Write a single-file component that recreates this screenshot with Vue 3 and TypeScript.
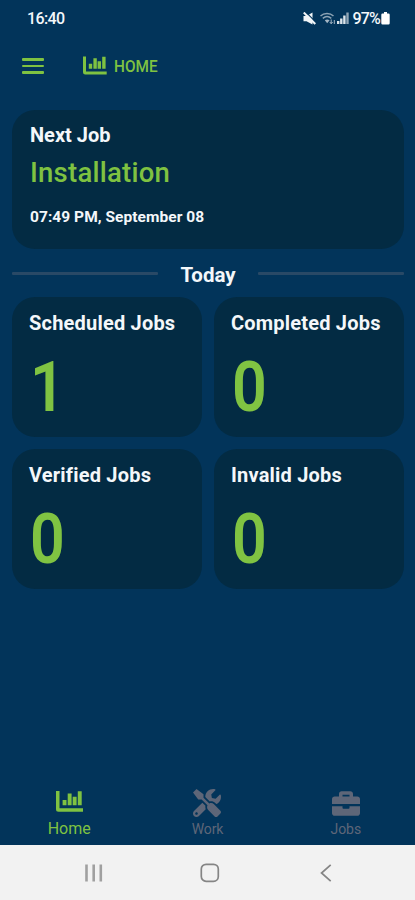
<script setup lang="ts">
import { ref } from 'vue'

interface Stat {
  label: string
  value: number
  key: string
}

type TabId = 'home' | 'work' | 'jobs'

interface Tab {
  id: TabId
  label: string
}

const stats: Stat[] = [
  { key: 'scheduled', label: 'Scheduled Jobs', value: 1 },
  { key: 'completed', label: 'Completed Jobs', value: 0 },
  { key: 'verified', label: 'Verified Jobs', value: 0 },
  { key: 'invalid', label: 'Invalid Jobs', value: 0 },
]

const tabs: Tab[] = [
  { id: 'home', label: 'Home' },
  { id: 'work', label: 'Work' },
  { id: 'jobs', label: 'Jobs' },
]

const activeTab = ref<TabId>('home')
</script>

<template>
  <div class="screen">
    <div class="status">
      <span class="clock">16:40</span>
      <div class="indicators">
        <svg class="mute" viewBox="0 0 13 13" width="13" height="13">
          <path d="M0.500 4h3L9.500 0.500v12L3.500 9.200h-3z" fill="#f1f5f8" />
          <path d="M2.200 -0.500l12 12" stroke="#02345a" stroke-width="1.200" />
          <path d="M0.800 0.500l11.500 11.500" stroke="#f1f5f8" stroke-width="2" />
        </svg>
        <svg class="wifi" viewBox="0 0 16 13" width="16" height="13" fill="none">
          <path d="M0.500 4C4 .8 10 .8 13.500 4M2.800 6.300c2.500-2 6-2 8.500 0" stroke="#8da3b4" stroke-width="1.500" />
          <path d="M4.800 8.300l2.400 3 2.400-3c-1.400-1.200-3.400-1.200-4.800 0z" fill="#a4b6c4" />
          <path d="M11.200 7.500v4M9.800 10l1.400 1.800L12.600 10M14.300 12V8" stroke="#a4b6c4" />
        </svg>
        <svg class="signal" viewBox="0 0 12 12" width="12" height="12">
          <path d="M0 9h2.400v3H0zM3.100 6.500h2.400V12H3.100zM6.200 3.500h2.400V12H6.200z" fill="#dce4ea" />
          <path d="M9.300 0.500h2.400V12H9.300z" fill="#91a6b7" />
        </svg>
        <span class="percent">97%</span>
        <svg class="battery" viewBox="0 0 9 13" width="9" height="13">
          <path d="M3 0h3v1.500h1.500q1.200 0 1.200 1.200v8.600q0 1.200-1.200 1.200h-6q-1.200 0-1.200-1.200V2.700q0-1.200 1.200-1.200H3z" fill="#fff" />
        </svg>
      </div>
    </div>

    <header class="topbar">
      <button class="menu" aria-label="Menu"><i></i><i></i><i></i></button>
      <svg class="chart" viewBox="0 0 24 19" width="24" height="19">
        <path d="M0 0.500h3v15h20.700v3H2.200Q0 18.500 0 16.300zM5.800 7.800h3.400v4.900H5.800zM10.400 2.300h3.400v10.400h-3.400zM14.600 5.300H18v7.400h-3.400zM19.200 0.800h3.400v11.900h-3.400z" fill="currentColor" />
      </svg>
      <h1 class="title">HOME</h1>
    </header>

    <main class="content">
      <section class="card next">
        <h2 class="card-title next-title">Next Job</h2>
        <p class="job">Installation</p>
        <p class="when">07:49 PM, September 08</p>
      </section>

      <div class="divider">
        <span class="line"></span>
        <h2 class="today">Today</h2>
        <span class="line"></span>
      </div>

      <div class="grid">
        <section v-for="s in stats" :key="s.key" class="card stat">
          <h3 class="card-title" :class="s.key">{{ s.label }}</h3>
          <p class="value">{{ s.value }}</p>
        </section>
      </div>
    </main>

    <nav class="tabs">
      <button
        v-for="t in tabs"
        :key="t.id"
        class="tab"
        :class="[t.id, { active: activeTab === t.id }]"
        @click="activeTab = t.id"
      >
        <span class="icon">
          <svg v-if="t.id === 'home'" viewBox="0 0 27 21" width="27" height="21">
            <path d="M0 0h3.500v17.300H27v3.500H2.500Q0 20.800 0 18.300zM6.600 9h3.900v5.200H6.600zM11.700 2.500h3.900v11.700h-3.900zM16.700 5.800h3.900v8.400h-3.900zM21.800 0.200h3.900v14h-3.900z" fill="currentColor" />
          </svg>
          <svg v-else-if="t.id === 'work'" viewBox="0 0 512 512" width="28" height="28">
            <path d="M501.100 395.700L384 278.600c-23.100-23.100-57.600-27.600-85.400-13.900L192 158.100V96L64 0 0 64l96 128h62.100l106.600 106.600c-13.600 27.800-9.200 62.300 13.900 85.400l117.100 117.100c14.600 14.600 38.200 14.600 52.700 0l52.700-52.700c14.500-14.600 14.500-38.200 0-52.700zM331.700 225c28.300 0 54.900 11 74.900 31l19.400 19.400c15.800-6.900 30.800-16.500 43.800-29.500 37.100-37.100 49.700-89.300 37.900-136.700-2.200-9-13.500-12.100-20.100-5.500l-74.400 74.400-67.900-11.300L334 98.900l74.400-74.400c6.600-6.600 3.400-17.900-5.700-20.200-47.400-11.700-99.600.9-136.600 37.900-28.500 28.500-41.900 66.100-41.200 103.600l82.100 82.100c8.100-1.900 16.500-2.900 24.700-2.900zm-103.900 82l-56.700-56.700L18.700 402.800c-25 25-25 65.500 0 90.500s65.500 25 90.500 0l123.600-123.600c-7.600-19.900-9.900-41.600-5-62.700zM64 472c-13.200 0-24-10.800-24-24 0-13.300 10.700-24 24-24s24 10.700 24 24c0 13.200-10.700 24-24 24z" fill="currentColor" />
          </svg>
          <svg v-else viewBox="0 0 512 448" width="28" height="25">
            <path d="M320 304c0 9-7 16-16 16h-96c-9 0-16-7-16-16v-32H0v128c0 25.600 22.400 48 48 48h416c25.600 0 48-22.400 48-48V272H320zM464 96h-80V48c0-25.600-22.400-48-48-48H176c-25.600 0-48 22.400-48 48v48H48c-25.600 0-48 22.400-48 48v88h512v-88c0-25.600-22.400-48-48-48zm-144 0H192V64h128z" fill="currentColor" />
          </svg>
        </span>
        <span class="tab-label">{{ t.label }}</span>
      </button>
    </nav>

    <footer class="system">
      <svg viewBox="0 0 18 18" width="18" height="18"><path d="M1.500 0.500v17M8.700 0.500v17M15.800 0.500v17" stroke="#a0a0a0" stroke-width="2.600" /></svg>
      <svg class="home-key" viewBox="0 0 20 20" width="20" height="20"><rect x="1.300" y="1.300" width="17" height="17" rx="4.800" fill="none" stroke="#858585" stroke-width="1.700" /></svg>
      <svg viewBox="0 0 12 18" width="12" height="18"><path d="M10.700 0.800L1.500 9l9.200 8.200" fill="none" stroke="#858585" stroke-width="1.700" /></svg>
    </footer>
  </div>
</template>

<style>
body {
  margin: 0;
  background: #02345a;
}
</style>

<style scoped>
.screen {
  width: 415px;
  height: 900px;
  display: flex;
  flex-direction: column;
  overflow: hidden;
  background: #02345a;
  color: #f4f7fa;
  font-family: Roboto, "Liberation Sans", sans-serif;
}
h1, h2, h3, p {
  margin: 0;
  white-space: nowrap;
}
button {
  padding: 0;
  border: 0;
  background: none;
  font: inherit;
  color: inherit;
}
.status {
  height: 36px;
  box-sizing: border-box;
  padding: 0 25px 0 27px;
  display: flex;
  align-items: center;
  justify-content: space-between;
}
.clock {
  font-size: 16px;
  font-weight: 500;
  letter-spacing: -0.6px;
}
.indicators {
  display: flex;
  align-items: center;
}
.wifi {
  margin-left: 4px;
}
.signal {
  margin-left: 1px;
}
.percent {
  margin: 0 1px 0 3px;
  font-size: 16px;
  font-weight: 500;
  letter-spacing: -0.8px;
}
.topbar {
  height: 74px;
  box-sizing: border-box;
  padding: 20px 22px 0;
  display: flex;
  align-items: flex-start;
  color: #7fc241;
}
.menu {
  width: 22px;
  margin: 2px 39px 0 0;
  display: flex;
  flex-direction: column;
  gap: 4px;
}
.menu i {
  height: 2.500px;
  border-radius: 1px;
  background: #7fc241;
}
.title {
  margin: 1px 0 0 7px;
  font-size: 16.500px;
  line-height: 20px;
  font-weight: 500;
  transform: scaleX(0.93);
  transform-origin: left;
}
.content {
  padding: 0 11px 0 12px;
}
.card {
  box-sizing: border-box;
  border-radius: 23px;
  background: #032b43;
}
.next {
  height: 139px;
  padding: 13px 18px;
}
.card-title {
  font-size: 20px;
  line-height: 24px;
  font-weight: 700;
  letter-spacing: 0.200px;
}
.next-title {
  letter-spacing: 0;
}
.job {
  margin-top: 8px;
  font-size: 27.500px;
  line-height: 36px;
  font-weight: 500;
  letter-spacing: 0.250px;
  color: #7fc241;
}
.when {
  margin-top: 16px;
  font-size: 15.500px;
  line-height: 20px;
  font-weight: 700;
  letter-spacing: 0.050px;
}
.divider {
  height: 48px;
  display: flex;
  align-items: center;
  justify-content: space-between;
}
.line {
  width: 146px;
  height: 3px;
  border-radius: 1px;
  background: #294966;
}
.today {
  margin-top: 4px;
  font-size: 20.500px;
  line-height: 24px;
  font-weight: 700;
}
.grid {
  display: grid;
  grid-template-columns: 190px 190px;
  grid-auto-rows: 140px;
  gap: 12px;
}
.stat {
  padding: 14px 17px;
}
.value {
  margin: 12px 0 0 1px;
  font-size: 70px;
  line-height: 80px;
  font-weight: 600;
  color: #80c342;
  transform: scaleX(0.87);
  transform-origin: left;
}
.tabs {
  margin-top: auto;
  height: 58px;
  display: grid;
  grid-template-columns: repeat(3, 1fr);
}
.tab {
  display: flex;
  flex-direction: column;
  align-items: center;
  justify-content: flex-start;
  color: #5e6678;
}
.tab.active {
  color: #7fc241;
}
.icon {
  height: 30px;
  display: flex;
  align-items: center;
}
.home .icon {
  height: 28px;
}
.tab-label {
  margin-top: 2px;
  font-size: 14px;
  line-height: 18px;
  letter-spacing: -0.100px;
}
.home .tab-label {
  margin-top: 5px;
  font-size: 16px;
  letter-spacing: 0;
}
.work .icon,
.jobs .icon {
  padding-top: 1px;
}
.system {
  height: 55px;
  box-sizing: border-box;
  padding: 0 83px 0 85px;
  display: flex;
  align-items: center;
  justify-content: space-between;
  background: #f2f2f2;
}
.home-key {
  margin-right: 4px;
}
</style>
